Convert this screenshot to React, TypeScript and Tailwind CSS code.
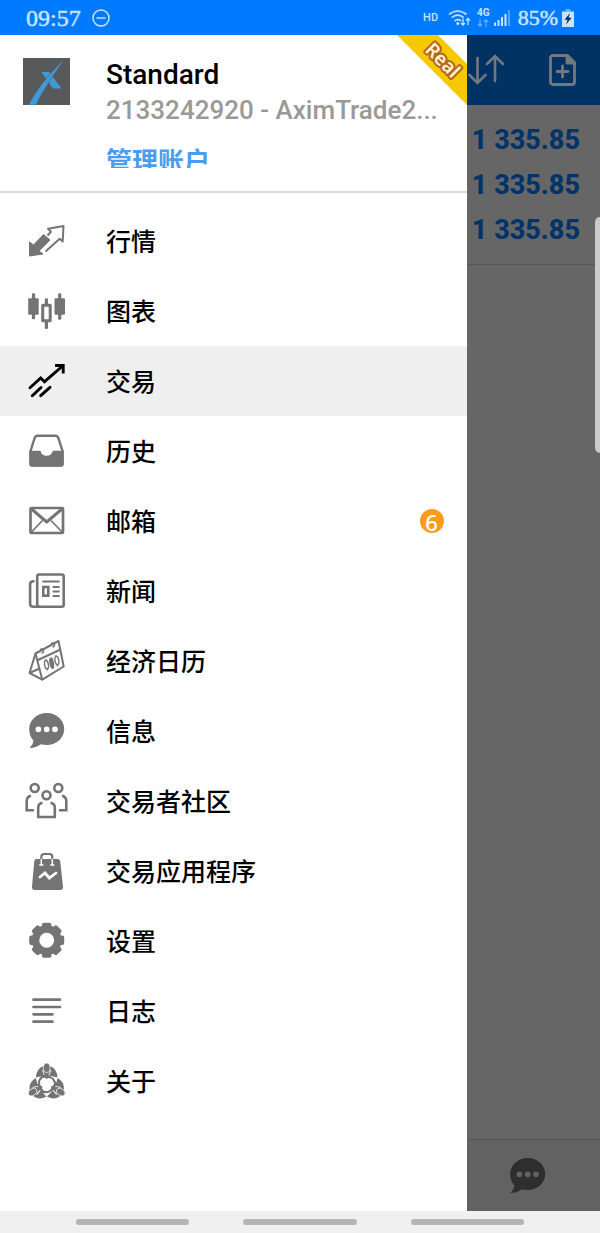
import React from 'react';
import clsx from 'clsx';

const iconClass = 'w-12 h-12 flex-shrink-0';

function QuotesIcon() {
  return (
    <svg className={iconClass} viewBox="0 0 48 48" fill="none" aria-hidden="true">
      <path d="M6.500 39V25l4 3 10-10.500 6.500 5.500-11 11 4 3z" fill="currentColor" stroke="currentColor" strokeWidth="1" strokeLinejoin="round" />
      <path d="M24.500 18.500l3.500-3.800-3-3L40.500 9l-.8 15.500-3-2.700L22.500 34.500" stroke="currentColor" strokeWidth="2" strokeLinejoin="round" />
    </svg>
  );
}

function ChartIcon() {
  return (
    <svg className={iconClass} viewBox="0 0 48 48" fill="none" aria-hidden="true">
      <g fill="currentColor">
        <rect x="5.200" y="11.300" width="10.500" height="16.500" rx="1.200" />
        <rect x="8.900" y="6.300" width="3.200" height="26" rx="1.300" />
        <rect x="31.500" y="11.300" width="10.500" height="16.500" rx="1.200" />
        <rect x="35.100" y="6.300" width="3.200" height="26.500" rx="1.300" />
        <rect x="21.800" y="11.300" width="3.200" height="7" rx="1.300" />
        <rect x="21.800" y="34" width="3.200" height="8" rx="1.300" />
      </g>
      <rect x="19.700" y="18.200" width="7.500" height="15.500" stroke="currentColor" strokeWidth="3" strokeLinejoin="round" />
    </svg>
  );
}

function TradeIcon() {
  return (
    <svg className={iconClass} viewBox="0 0 48 48" fill="none" stroke="currentColor" strokeWidth="2.900" aria-hidden="true">
      <path d="M7 30.700L17.700 21l3.800 3.700L39 9.500M9.300 38.700l8.700-8.200M17.700 38.700l9.300-8.400" strokeLinecap="round" />
      <path d="M32 8.500h8.200v8" />
    </svg>
  );
}

function HistoryIcon() {
  return (
    <svg className={iconClass} viewBox="0 0 48 48" fill="none" aria-hidden="true">
      <path d="M7.500 24L11.700 11q.8-2.200 3-2.200h17.600q2.200 0 3 2.200L39.500 24v12.500q0 2-2 2h-28q-2 0-2-2z" stroke="currentColor" strokeWidth="2.400" />
      <path d="M6.400 23.700h11.100a6.200 6.200 0 0012.200 0h11V37q0 2.600-2.500 2.600H9q-2.600 0-2.600-2.600z" fill="currentColor" />
    </svg>
  );
}

function MailIcon() {
  return (
    <svg className={iconClass} viewBox="0 0 48 48" fill="none" stroke="currentColor" aria-hidden="true">
      <rect x="7.500" y="11" width="32.500" height="25" rx="1" strokeWidth="2.700" />
      <path d="M8 11.500L23.700 25 39.500 11.500" strokeWidth="3" strokeLinejoin="round" />
      <path d="M8 35.500l11.500-12M39.500 35.500L28 23.500" strokeWidth="1.700" />
    </svg>
  );
}

function NewsIcon() {
  return (
    <svg className={iconClass} viewBox="0 0 48 48" fill="none" stroke="currentColor" strokeWidth="2.600" strokeLinecap="round" aria-hidden="true">
      <rect x="14.200" y="7.500" width="26.500" height="32.300" rx="2" />
      <path d="M10.500 14.300q-3.400 0-3.400 3v19.500q0 3 3.400 3h6" />
      <path d="M20.200 14.500h15.600M30.500 20h5.300M30.500 24.500h5.300M30.500 29h5.300" strokeWidth="2.200" />
      <rect x="20.300" y="20" width="5" height="8.700" />
    </svg>
  );
}

function CalendarIcon() {
  return (
    <svg className={iconClass} viewBox="0 0 48 48" fill="none" stroke="currentColor" strokeWidth="2" strokeLinejoin="round" aria-hidden="true">
      <path d="M12.500 16.500L35.500 4l5.200 25.500L19.300 42.700z" />
      <path d="M12.500 16.500L6.500 36l12.800 6.700M6.500 36l10-4.500M14 23.500l23.500-11" />
      <path d="M17 12.500q2.500-1.500 3.300.8t-1.800 3M28 6.500q2.500-1.500 3.300.8t-1.800 3" strokeWidth="1.500" />
      <g strokeWidth="1.400">
        <path d="M23 22v2M24.500 31.500v2M33 18v2M34.500 27.500v2" />
        <ellipse cx="23.500" cy="27.700" rx="1.900" ry="4.200" transform="rotate(-10 23.500 27.700)" />
        <ellipse cx="28.700" cy="26.200" rx="1.600" ry="5.200" fill="currentColor" transform="rotate(-10 28.700 26.200)" />
        <ellipse cx="33.900" cy="23.500" rx="1.900" ry="4.200" transform="rotate(-10 33.900 23.500)" />
      </g>
    </svg>
  );
}

function MessageIcon() {
  return (
    <svg className={iconClass} viewBox="0 0 48 48" fill="currentColor" fillRule="evenodd" aria-hidden="true">
      <path d="M23.700 6C33.500 6 41.200 13 41.200 22s-7.700 16-17.500 16q-3.200 0-5.700-.8-5 3.600-11.500 3.800 3.800-3.500 4-7.300C7.700 30.700 6.200 26.500 6.200 22 6.200 13 14 6 23.700 6zM12.500 22.300a2.900 2.900 0 105.800 0 2.900 2.900 0 10-5.800 0zm8.300 0a2.900 2.900 0 105.800 0 2.900 2.900 0 10-5.800 0zm8.300 0a2.900 2.900 0 105.800 0 2.900 2.900 0 10-5.800 0z" />
    </svg>
  );
}

function CommunityIcon() {
  return (
    <svg className={iconClass} viewBox="0 0 48 48" fill="none" stroke="currentColor" strokeWidth="2.600" aria-hidden="true">
      <circle cx="11.700" cy="11" r="4" />
      <circle cx="35.300" cy="11" r="4" />
      <circle cx="23.500" cy="18.300" r="4" />
      <path d="M19.500 25.800q-4.300.7-4.300 5v9.200h16.600v-9.200q0-4.300-4.300-5" />
      <path d="M8 18.700q-4.300 1-4.300 5.300v9.200H11M39 18.700q4.300 1 4.300 5.300v9.200H36" />
    </svg>
  );
}

function AppsIcon() {
  return (
    <svg className={iconClass} viewBox="0 0 48 48" fill="none" strokeLinecap="round" aria-hidden="true">
      <path d="M13.500 12h21q2.300 0 2.700 2.300L40 39.500q.3 3.500-3 3.500H12q-3.300 0-3-3.500l2.300-25.200Q11.600 12 13.500 12z" fill="currentColor" />
      <path d="M18.300 12v-2q0-3 3-3h5q3 0 3 3v2" stroke="currentColor" strokeWidth="2.200" />
      <path d="M18.300 12.500v5M29.300 12.500v5M16.800 18h3M27.800 18h3" stroke="white" strokeWidth="1.500" />
      <path d="M17 30l5-4 4.300 5 6.700-5" stroke="white" strokeWidth="2.800" />
    </svg>
  );
}

function SettingsIcon() {
  return (
    <svg className={iconClass} viewBox="0 0 48 48" fill="none" aria-hidden="true">
      <circle cx="23.700" cy="23.300" r="11.200" stroke="currentColor" strokeWidth="7.500" />
      {[0, 45, 90, 135, 180, 225, 270, 315].map((angle) => (
        <rect key={angle} x="19" y="5.800" width="9.400" height="6" rx="2" fill="currentColor" transform={`rotate(${angle} 23.7 23.3)`} />
      ))}
    </svg>
  );
}

function JournalIcon() {
  return (
    <svg className={iconClass} viewBox="0 0 48 48" fill="none" stroke="currentColor" strokeWidth="2.700" strokeLinecap="round" aria-hidden="true">
      <path d="M10.500 12.700H37M10.500 20H37M10.500 27.300h19M10.500 34.700h19" />
    </svg>
  );
}

function AboutIcon() {
  return (
    <svg className={iconClass} viewBox="0 0 48 48" fill="none" aria-hidden="true">
      {[0, 120, 240].map((angle) => (
        <g key={angle} transform={`rotate(${angle} 23.7 27)`}>
          <path d="M13 20.500q0-8.500 7.500-11.500h6.400q7.500 3 7.500 11.500l-6.500-1.500-4.200 3-4.200-3z" fill="currentColor" />
          <ellipse cx="23.700" cy="10.800" rx="3.300" ry="4.700" fill="currentColor" stroke="white" strokeWidth=".7" />
          <path d="M19.500 13l2 5.500M27.900 13l-2 5.500" stroke="white" strokeWidth=".9" />
          <path d="M18 20.500q6-2.500 11.500 1 3.500 3 2.500 9" stroke="currentColor" strokeWidth="2" />
          <circle cx="17.500" cy="22" r="1.100" fill="currentColor" />
        </g>
      ))}
    </svg>
  );
}

const menuItems = [
  { label: '行情', icon: QuotesIcon },
  { label: '图表', icon: ChartIcon },
  { label: '交易', icon: TradeIcon, active: true },
  { label: '历史', icon: HistoryIcon },
  { label: '邮箱', icon: MailIcon, badge: 6 },
  { label: '新闻', icon: NewsIcon },
  { label: '经济日历', icon: CalendarIcon },
  { label: '信息', icon: MessageIcon },
  { label: '交易者社区', icon: CommunityIcon },
  { label: '交易应用程序', icon: AppsIcon },
  { label: '设置', icon: SettingsIcon },
  { label: '日志', icon: JournalIcon },
  { label: '关于', icon: AboutIcon },
];

const balances = ['1 335.85', '1 335.85', '1 335.85'];

function StatusBar() {
  return (
    <div className="flex h-[35px] items-center justify-between bg-[#007aff] px-[26px] text-[#c9e3ff]">
      <div className="flex items-center gap-[11px]">
        <span className="font-['Liberation_Serif',serif] text-2xl leading-none [-webkit-text-stroke:0.5px]">09:57</span>
        <svg className="h-[18px] w-[18px]" viewBox="0 0 18 18" fill="none" stroke="currentColor" strokeWidth="1.500" aria-hidden="true">
          <circle cx="9" cy="9" r="8" />
          <path d="M4.500 9h9" />
        </svg>
      </div>
      <div className="flex items-center">
        <span className="text-[11px] font-medium leading-none">HD</span>
        {/* Wifi */}
        <svg className="ml-2.5 h-[18px] w-[23px]" viewBox="0 0 23 18" fill="none" stroke="currentColor" strokeWidth="1.600" aria-hidden="true">
          <path d="M1 5.500q8.500-7 17.500 0M3.700 8.700q6-5 12 0M6.500 12q3.300-2.800 6.700 0" />
          <circle cx="9.800" cy="14.500" r="1.500" fill="currentColor" stroke="none" />
          <path d="M15 9.500v6.500M13 14l2 2 2-2M20 16V9.500M18 11.500l2-2 2 2" strokeWidth="1.300" />
        </svg>
        {/* Mobile network */}
        <div className="ml-1.5 flex flex-col items-center gap-0.5">
          <span className="text-[10px] font-bold leading-[9px]">4G</span>
          <svg className="h-2 w-3" viewBox="0 0 12 8" fill="none" stroke="currentColor" strokeOpacity=".5" strokeWidth="1.200" aria-hidden="true">
            <path d="M3 0v7M.8 5L3 7.200 5.200 5M9 8V1M6.800 3L9 .8 11.200 3" />
          </svg>
        </div>
        <svg className="ml-1 h-4 w-4" viewBox="0 0 16 16" fill="currentColor" aria-hidden="true">
          <path d="M0 12.500h2V16H0zM3.500 10h2v6h-2zM7 7h2v9H7zM10.500 4h2v12h-2z" />
          <path d="M14 0h2v16h-2z" opacity=".4" />
        </svg>
        <span className="ml-2 font-['Liberation_Serif',serif] text-[22px] leading-none [-webkit-text-stroke:0.5px]">85%</span>
        <svg className="ml-1 h-[18px] w-3" viewBox="0 0 12 18" aria-hidden="true">
          <path d="M3.500 0h5v2.500H3.500z" fill="currentColor" opacity=".5" />
          <path d="M0 2.500h12V18H0z" fill="currentColor" />
          <path d="M8 4L2.500 10.700H5.500L4 15.500l5.700-6.800H6.600z" fill="#003263" />
        </svg>
      </div>
    </div>
  );
}

function AccountHeader() {
  return (
    <div className="relative flex gap-9 border-b-2 border-[#d9d9d9] pb-[23px] pl-[23px] pt-[23px]">
      <svg className="h-[47px] w-[47px] flex-shrink-0" viewBox="0 0 47 47" role="img" aria-label="AximTrade">
        <path d="M0 0h47v47H0z" fill="#58595b" />
        <path d="M18.500 14h7.500L38.500 30.500h-8.500z" fill="#3f9bd8" />
        <path d="M41.500 1C33 9 15 28 5.500 47h7.500C20 32 30 18 41.500 1z" fill="#3f9bd8" stroke="#58595b" strokeWidth=".5" />
      </svg>
      <div className="min-w-0 flex-1">
        <p className="text-[28px] font-medium leading-[34px] text-black">Standard</p>
        <p className="whitespace-nowrap text-[26px] font-medium leading-9 text-[#9b9996]">2133242920 - AximTrade2...</p>
        <a href="#accounts" className="mt-3 block h-7 overflow-hidden text-[26px] font-bold leading-[44px] text-[#4a9df0]">
          管理账户
        </a>
      </div>

      {/* Corner ribbon */}
      <svg className="absolute right-0 top-0 h-[70px] w-[70px]" viewBox="0 0 70 70">
        <path d="M0 0h41l29 29v41z" fill="#f6c800" />
        <text
          x="46"
          y="25"
          transform="rotate(45 46 25)"
          textAnchor="middle"
          dominantBaseline="central"
          className="fill-[#fff3d6] stroke-[#b5651d] stroke-4 font-['Noto_Sans',sans-serif] text-[19px] font-semibold [paint-order:stroke] [stroke-linejoin:round]"
        >
          Real
        </text>
      </svg>
    </div>
  );
}

function Drawer() {
  return (
    <aside className="w-7/9 flex-shrink-0 bg-white">
      <AccountHeader />
      <nav>
        <ul className="pb-3 pt-[13px]">
          {menuItems.map(({ label, icon: Icon, active, badge }) => (
            <li key={label}>
              <a
                href="#menu"
                className={clsx(
                  'flex h-[70px] items-center gap-[35px] pl-[23px] pr-[23px]',
                  active ? 'bg-[#efefef] text-black' : 'text-[#747474]'
                )}
              >
                <Icon />
                <span className="flex-1 pt-1 text-[25px] font-medium leading-9 text-black">{label}</span>
                {badge && (
                  <span className="flex h-6 w-6 items-center justify-center rounded-full bg-[#ff9c1c] pt-0.5 font-['Noto_Sans',sans-serif] text-[22px] font-medium leading-none text-white">
                    {badge}
                  </span>
                )}
              </a>
            </li>
          ))}
        </ul>
      </nav>
    </aside>
  );
}

function TradePanel() {
  return (
    <main className="relative flex min-w-0 flex-1 flex-col bg-[#666666]">
      <div className="flex h-[70px] items-center justify-between bg-[#003263] pl-px pr-6 text-[#73787d]">
        <button type="button" aria-label="Sort">
          <svg className="h-8 w-9" viewBox="0 0 36 32" fill="none" stroke="currentColor" strokeWidth="2.600" strokeLinecap="round" aria-hidden="true">
            <path d="M9.500 4v25M1.500 21l8 8 8-8M27 27V2M19 10l8-8 8 8" />
          </svg>
        </button>
        <button type="button" aria-label="New order">
          <svg className="h-8 w-[27px]" viewBox="0 0 27 32" fill="none" stroke="currentColor" strokeWidth="2.800" strokeLinejoin="round" aria-hidden="true">
            <path d="M4 1.500h14.500l7 7V28q0 2.500-2.500 2.500H4Q1.500 30.500 1.500 28V4Q1.500 1.500 4 1.500z" />
            <path d="M18 1.500l7.500 7.500H18z" fill="currentColor" />
            <path d="M8 17.500h11M13.500 12v11" strokeLinecap="round" />
          </svg>
        </button>
      </div>
      <div className="border-b border-[#565656] pb-[11px] pr-5 pt-[13px] text-right text-[27px] font-extrabold leading-[45px] text-[#003468]">
        {balances.map((value, i) => (
          <p key={i} className="whitespace-nowrap">{value}</p>
        ))}
      </div>
      <div className="mt-auto flex h-[72px] items-center justify-center border-t border-[#565656] bg-[#626262] pr-[11px] text-[#2e2e2e]">
        <button type="button" aria-label="Messages">
          <MessageIcon />
        </button>
      </div>

      {/* Edge panel handle */}
      <div className="absolute right-0 top-[182px] h-[236px] w-[5px] rounded-l-md bg-[#cbcbcb]"></div>
    </main>
  );
}

export default function App() {
  return (
    <div className="flex min-h-screen flex-col font-[Roboto,'Noto_Sans_CJK_SC',sans-serif]">
      <StatusBar />
      <div className="flex flex-1">
        <Drawer />
        <TradePanel />
      </div>
      {/* System navigation */}
      <div className="flex h-[22px] items-center gap-[54px] bg-[#f0f0f0] px-19">
        <span className="h-1.5 flex-1 rounded-full bg-[#b5b5b5]"></span>
        <span className="h-1.5 flex-1 rounded-full bg-[#b5b5b5]"></span>
        <span className="h-1.5 flex-1 rounded-full bg-[#b5b5b5]"></span>
      </div>
    </div>
  );
}
